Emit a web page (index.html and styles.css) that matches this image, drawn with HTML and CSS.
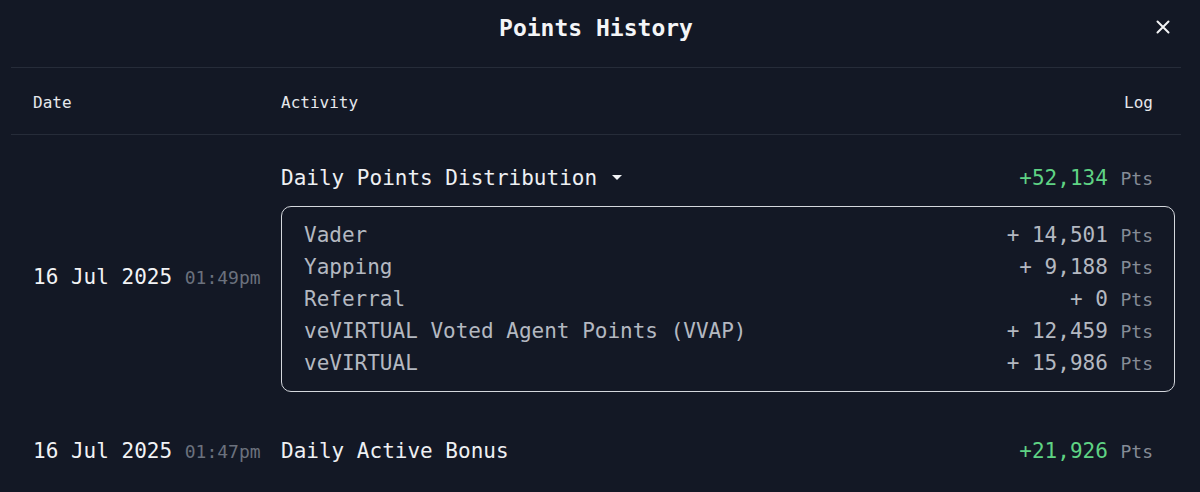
FILE: index.html
```html
<!DOCTYPE html>
<html lang="en">
<head>
  <meta charset="UTF-8">
  <meta name="viewport" content="width=device-width, initial-scale=1.0">
  <title>Points History</title>
  <link rel="stylesheet" href="styles.css">
</head>
<body>

<div class="panel">
  <div class="panel-head">
    <h2>Points History</h2>
    <button class="close" aria-label="Close">
      <svg width="14" height="14" viewBox="0 0 14 14">
        <path d="M1.5 1.5 L12.5 12.5 M12.5 1.5 L1.5 12.5" stroke="#f2f3f5" stroke-width="2" stroke-linecap="round"/>
      </svg>
    </button>
  </div>

  <div class="table-head">
    <span class="col-date">Date</span>
    <span class="col-activity">Activity</span>
    <span class="col-log">Log</span>
  </div>

  <div class="row">
    <div class="date">16 Jul 2025 <span class="time">01:49pm</span></div>
    <div class="activity">
      <div class="activity-title">
        <span>Daily Points Distribution <span class="caret"></span></span>
        <span class="total">+52,134 <span class="unit">Pts</span></span>
      </div>
      <div class="breakdown">
        <div class="item"><span>Vader</span><span>+ 14,501 <span class="unit">Pts</span></span></div>
        <div class="item"><span>Yapping</span><span>+ 9,188 <span class="unit">Pts</span></span></div>
        <div class="item"><span>Referral</span><span>+ 0 <span class="unit">Pts</span></span></div>
        <div class="item"><span>veVIRTUAL Voted Agent Points (VVAP)</span><span>+ 12,459 <span class="unit">Pts</span></span></div>
        <div class="item"><span>veVIRTUAL</span><span>+ 15,986 <span class="unit">Pts</span></span></div>
      </div>
    </div>
  </div>

  <div class="row row-single">
    <div class="date">16 Jul 2025 <span class="time">01:47pm</span></div>
    <div class="activity">
      <div class="activity-title">
        <span>Daily Active Bonus</span>
        <span class="total">+21,926 <span class="unit">Pts</span></span>
      </div>
    </div>
  </div>
</div>

</body>
</html>
```

FILE: styles.css
```css
body {
  font-family: "DejaVu Sans Mono", "Liberation Mono", monospace;
  background-color: #131825;
  color: #eef0f3;
  margin: 0;
  padding: 0;
}
.panel {
  width: 1170px;
  margin-left: 11px;
}
.panel-head {
  height: 67px;
  border-bottom: 1px solid #262c39;
  display: flex;
  align-items: center;
  justify-content: center;
  position: relative;
}
.panel-head h2 {
  margin: 0;
  font-size: 23px;
  font-weight: bold;
  color: #f4f5f7;
  padding-bottom: 12px;
}
.close {
  position: absolute;
  right: 11px;
  top: 20px;
  background: none;
  border: none;
  padding: 0;
  cursor: pointer;
  display: flex;
}
.table-head {
  height: 64px;
  border-bottom: 1px solid #262c39;
  display: flex;
  align-items: center;
  padding: 2px 28px 0 22px;
  font-size: 16px;
  color: #e6e8ec;
}
.col-date {
  width: 248px;
}
.col-activity {
  flex: 1;
}
.row {
  display: flex;
  align-items: center;
  padding: 27px 6px 16px 22px;
  font-size: 21px;
}
.row-single {
  padding-top: 27px;
}
.date {
  width: 248px;
  color: #f2f3f5;
  white-space: nowrap;
}
.time {
  font-size: 18px;
  color: #6b717d;
}
.activity {
  flex: 1;
}
.activity-title {
  display: flex;
  justify-content: space-between;
  align-items: center;
  line-height: 32px;
  padding-right: 22px;
}
.caret {
  display: inline-block;
  width: 0;
  height: 0;
  border-left: 5px solid transparent;
  border-right: 5px solid transparent;
  border-top: 5px solid #f2f3f5;
  vertical-align: middle;
  margin-left: 2px;
  margin-bottom: 3px;
}
.total {
  color: #5fd384;
}
.unit {
  font-size: 18px;
  line-height: 1;
  color: #858b96;
}
.breakdown {
  margin-top: 12px;
  border: 1.5px solid #d4d7dd;
  border-radius: 10px;
  padding: 12px 21px 12px 22px;
  color: #b4b8c1;
}
.item {
  display: flex;
  justify-content: space-between;
  line-height: 32px;
}
```
